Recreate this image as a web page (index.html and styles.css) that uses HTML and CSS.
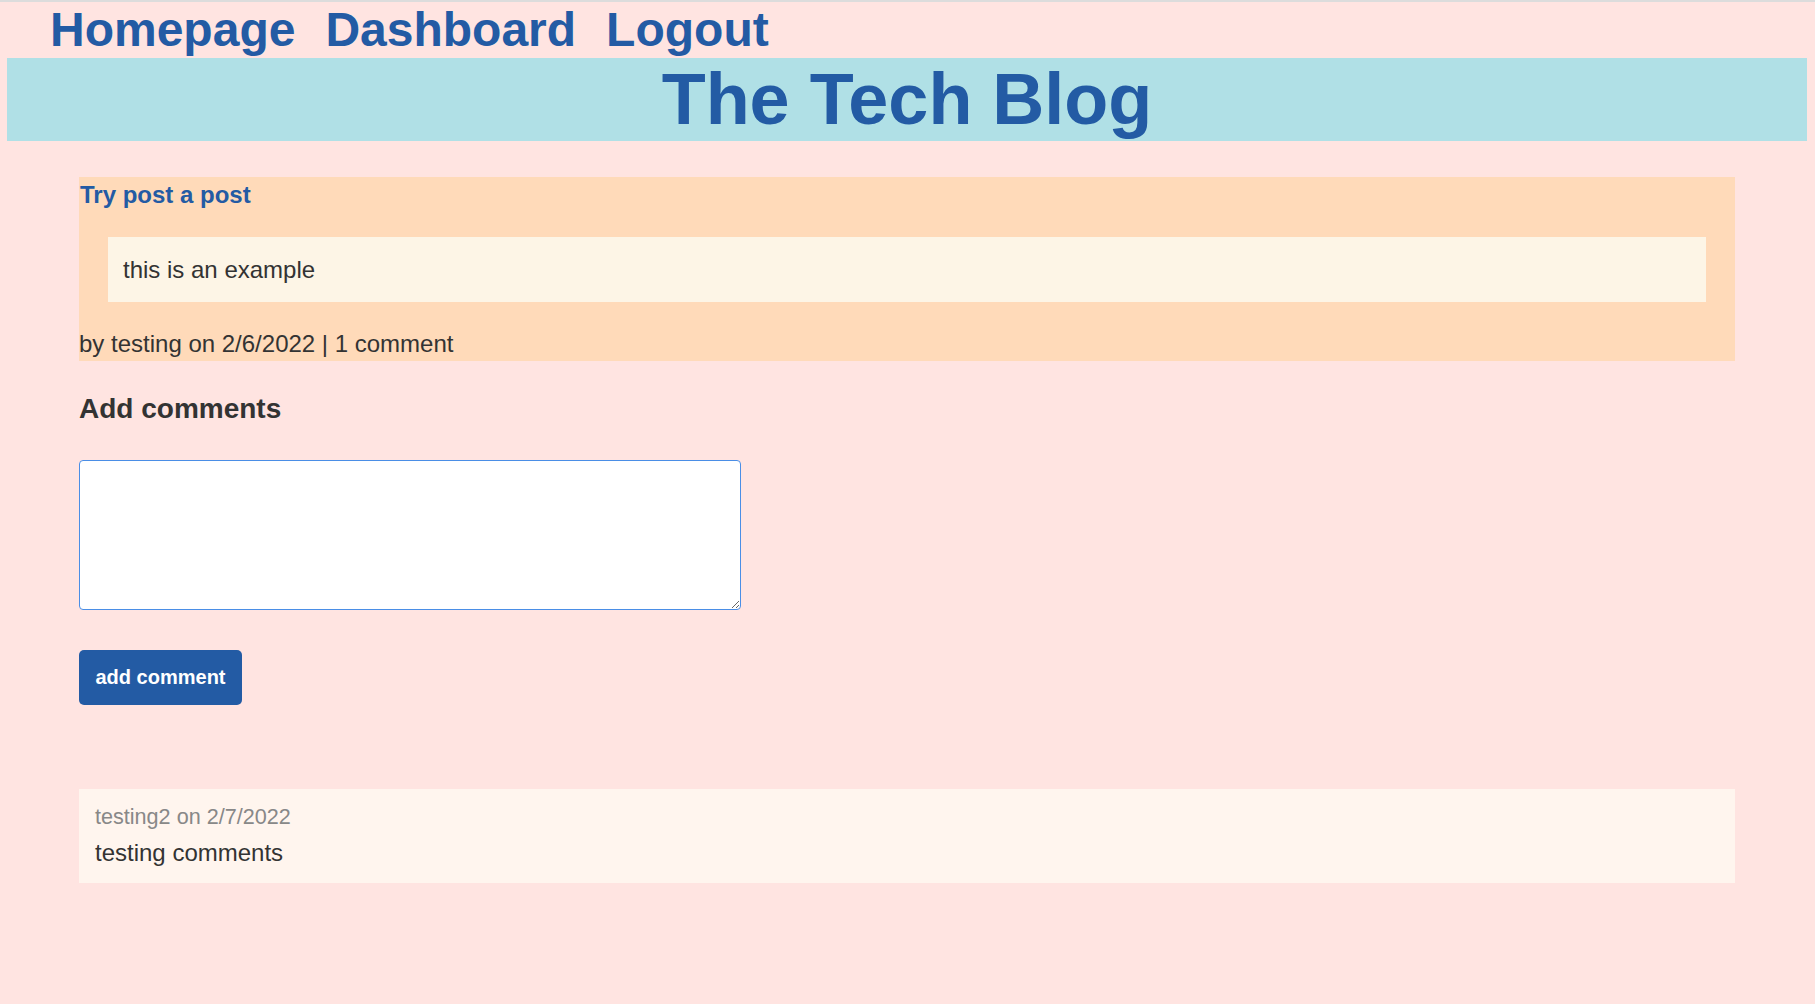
FILE: index.html
```html
<!DOCTYPE html>
<html lang="en">
<head>
<meta charset="utf-8">
<title>The Tech Blog</title>
<link rel="stylesheet" href="styles.css">
</head>
<body>
<nav class="nav">
  <a class="nav-link" href="#">Homepage</a>
  <a class="nav-link" href="#">Dashboard</a>
  <a class="nav-link" href="#">Logout</a>
</nav>
<header class="banner">
  <h1 class="banner-title">The Tech Blog</h1>
</header>
<main class="main">
  <article class="post">
    <h2 class="post-title">Try post a post</h2>
    <div class="post-body">this is an example</div>
    <p class="post-meta">by testing on 2/6/2022 | 1 comment</p>
  </article>
  <section class="comment-form">
    <h3 class="form-title">Add comments</h3>
    <textarea class="form-input" autofocus></textarea>
    <button class="form-button" type="button">add comment</button>
  </section>
  <section class="comments">
    <div class="comment">
      <p class="comment-meta">testing2 on 2/7/2022</p>
      <p class="comment-text">testing comments</p>
    </div>
  </section>
</main>
</body>
</html>
```
FILE: styles.css
```css
html {
  border-top: 2px solid #dcdcdc;
  background: #ffe4e1;
}
body {
  margin: 0;
  font-family: "Liberation Sans", Arial, sans-serif;
  font-size: 24px;
  color: #333333;
  background: #ffe4e1;
}
.nav {
  display: flex;
  gap: 30px;
  padding-left: 50px;
  height: 56px;
}
.nav-link {
  font-size: 48px;
  font-weight: bold;
  color: #235ba4;
  text-decoration: none;
  line-height: 55px;
}
.banner {
  margin: 0 8px 0 7px;
  background: #b0e0e6;
}
.banner-title {
  margin: 0;
  font-size: 72px;
  font-weight: bold;
  color: #235ba4;
  text-align: center;
  line-height: 82.8px;
}
.main {
  margin: 36.5px 80px 0 79px;
}
.post {
  background: #ffdab9;
  padding: 4px 0 3.5px;
}
.post-title {
  margin: 0 0 0 1px;
  font-size: 24px;
  line-height: 27.6px;
  color: #235ba4;
}
.post-body {
  margin: 28.5px 29px 28px;
  padding: 18.5px 15px;
  background: #fdf5e6;
  line-height: 27.6px;
}
.post-meta {
  margin: 0;
  line-height: 27.6px;
}
.form-title {
  margin: 32px 0 0;
  font-size: 28px;
  line-height: 32.2px;
}
.form-input {
  display: block;
  box-sizing: border-box;
  margin-top: 34.5px;
  width: 662px;
  height: 150px;
  border: 1px solid #4a8ee6;
  border-radius: 4px;
  outline: none;
  background: #ffffff;
  font-family: "Liberation Sans", Arial, sans-serif;
  font-size: 20px;
  padding: 8px;
}
.form-button {
  display: block;
  margin-top: 40px;
  width: 163px;
  height: 55.5px;
  border: none;
  border-radius: 5px;
  background: #235ba4;
  color: #ffffff;
  font-family: "Liberation Sans", Arial, sans-serif;
  font-size: 20px;
  font-weight: bold;
  padding: 0;
}
.comments {
  margin-top: 83.5px;
}
.comment {
  background: #fff5ee;
  padding: 16px 16px 17px;
}
.comment-meta {
  margin: 0 0 9.2px;
  font-size: 21.6px;
  line-height: 24.8px;
  color: #888888;
}
.comment-text {
  margin: 0;
  line-height: 27.6px;
}
```
